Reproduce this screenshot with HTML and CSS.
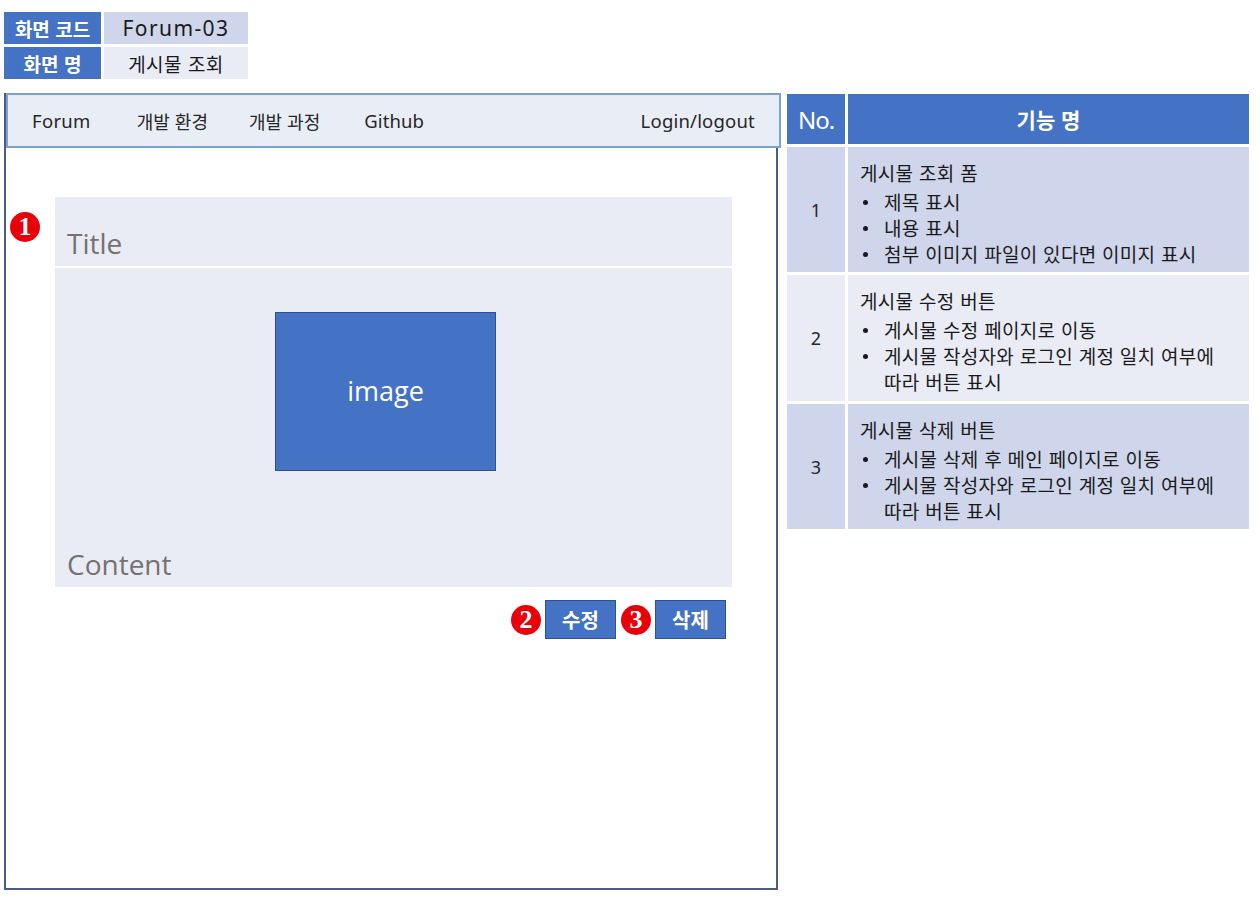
FILE: index.html
```html
<!DOCTYPE html>
<html lang="ko">
<head>
<meta charset="utf-8">
<title>Forum-03 게시물 조회</title>
<link rel="stylesheet" href="styles.css">
</head>
<body>
<div class="meta">
  <div class="meta-row">
    <div class="meta-label">화면 코드</div>
    <div class="meta-value meta-value-a">Forum-03</div>
  </div>
  <div class="meta-row">
    <div class="meta-label">화면 명</div>
    <div class="meta-value meta-value-b">게시물 조회</div>
  </div>
</div>

<div class="main">
  <div class="frame">
    <nav class="navbar">
      <span class="nav-item nav-forum">Forum</span>
      <span class="nav-item nav-env">개발 환경</span>
      <span class="nav-item nav-proc">개발 과정</span>
      <span class="nav-item nav-git">Github</span>
      <span class="nav-login">Login/logout</span>
    </nav>
    <div class="post">
      <span class="badge badge-1">1</span>
      <div class="title-box">Title</div>
      <div class="content-box">
        <div class="image">image</div>
        <div class="content-label">Content</div>
      </div>
      <div class="actions">
        <span class="badge badge-inline">2</span>
        <button class="btn">수정</button>
        <span class="badge badge-inline">3</span>
        <button class="btn">삭제</button>
      </div>
    </div>
  </div>

  <div class="spec">
    <div class="spec-head spec-no">No.</div>
    <div class="spec-head spec-name">기능 명</div>

    <div class="spec-num row-a">1</div>
    <div class="spec-desc row-a">
      <div class="spec-title">게시물 조회 폼</div>
      <ul>
        <li>제목 표시</li>
        <li>내용 표시</li>
        <li>첨부 이미지 파일이 있다면 이미지 표시</li>
      </ul>
    </div>

    <div class="spec-num row-b">2</div>
    <div class="spec-desc row-b">
      <div class="spec-title">게시물 수정 버튼</div>
      <ul>
        <li>게시물 수정 페이지로 이동</li>
        <li>게시물 작성자와 로그인 계정 일치 여부에 따라 버튼 표시</li>
      </ul>
    </div>

    <div class="spec-num row-a">3</div>
    <div class="spec-desc row-a">
      <div class="spec-title">게시물 삭제 버튼</div>
      <ul>
        <li>게시물 삭제 후 메인 페이지로 이동</li>
        <li>게시물 작성자와 로그인 계정 일치 여부에 따라 버튼 표시</li>
      </ul>
    </div>
  </div>
</div>
</body>
</html>
```

FILE: styles.css
```css
* { box-sizing: border-box; }

html, body {
  margin: 0;
  padding: 0;
  background: #ffffff;
}

body {
  width: 1260px;
  height: 902px;
  font-family: "Noto Sans CJK KR", "Noto Sans", sans-serif;
  color: #1a1a1a;
  overflow: hidden;
}

/* ---------- screen meta table ---------- */
.meta {
  margin: 12px 0 0 4px;
  display: flex;
  flex-direction: column;
  gap: 3px;
  width: 244px;
}

.meta-row {
  display: flex;
  gap: 3px;
  height: 32px;
}

.meta-label {
  width: 97px;
  background: #4472c4;
  color: #ffffff;
  font-weight: 700;
  font-size: 19px;
  display: flex;
  align-items: center;
  justify-content: center;
  line-height: 1;
}

.meta-value {
  flex: 1;
  display: flex;
  align-items: center;
  justify-content: center;
  font-size: 19px;
  line-height: 1;
  color: #1a1a1a;
}

.meta-value-a {
  background: #cfd5ea;
  font-family: "Noto Sans", sans-serif;
  font-size: 21px;
  letter-spacing: 1.4px;
}
.meta-value-b { background: #e9ebf5; letter-spacing: 0.5px; }

/* ---------- main area ---------- */
.main {
  display: flex;
  gap: 9px;
  margin: 14px 0 0 4px;
  align-items: flex-start;
}

.frame {
  width: 774px;
  height: 797px;
  border: 2px solid #4a5d87;
  border-top: none;
  display: flex;
  flex-direction: column;
}

.navbar {
  height: 55px;
  margin: 0 -5px 0 0;
  background: #e9edf6;
  border: 2px solid #79a2d3;
  display: flex;
  align-items: center;
  font-family: "Noto Sans", "Noto Sans CJK KR", sans-serif;
  font-size: 18.5px;
  color: #262626;
  padding: 0 24px 0 0;
}

.nav-forum { margin-left: 24px; letter-spacing: 0.3px; }
.nav-env { margin-left: 46px; font-family: "Noto Sans CJK KR", sans-serif; font-size: 18px; }
.nav-proc { margin-left: 41px; font-family: "Noto Sans CJK KR", sans-serif; font-size: 18px; }
.nav-git { margin-left: 44px; letter-spacing: 0.1px; }
.nav-login { margin-left: auto; letter-spacing: 0.2px; }

.post {
  position: relative;
  padding: 49px 44px 0 49px;
  display: flex;
  flex-direction: column;
}

.title-box {
  height: 69px;
  background: #e9ebf5;
  font-family: "Open Sans", "Noto Sans", sans-serif;
  font-size: 28px;
  color: #767171;
  display: flex;
  align-items: flex-end;
  padding: 0 0 9px 12px;
  line-height: 1;
}

.content-box {
  margin-top: 2px;
  height: 319px;
  background: #e9ebf5;
  display: flex;
  flex-direction: column;
  padding: 44px 0 0 0;
}

.image {
  width: 221px;
  height: 159px;
  margin-left: 220px;
  background: #4472c4;
  border: 1px solid #2f528f;
  color: #ffffff;
  font-family: "Open Sans", "Noto Sans", sans-serif;
  font-size: 27px;
  display: flex;
  align-items: center;
  justify-content: center;
  padding-bottom: 2px;
}

.content-label {
  margin-top: auto;
  padding: 0 0 9px 12px;
  font-family: "Open Sans", "Noto Sans", sans-serif;
  font-size: 28px;
  color: #767171;
  line-height: 1;
}

.actions {
  margin-top: 13px;
  display: flex;
  justify-content: flex-end;
  align-items: center;
  padding-right: 6px;
}

.btn {
  width: 71px;
  height: 39px;
  background: #4472c4;
  border: 1.5px solid #2f528f;
  color: #ffffff;
  font-family: "Noto Sans CJK KR", sans-serif;
  font-weight: 700;
  font-size: 20px;
  padding: 0;
  margin: 0;
  line-height: 1;
}

.badge {
  width: 30px;
  height: 30px;
  border-radius: 50%;
  background: #e8000b;
  color: #ffffff;
  font-family: "Liberation Serif", serif;
  font-weight: 700;
  font-size: 26px;
  line-height: 30px;
  text-align: center;
  display: inline-block;
}

.badge-1 {
  position: absolute;
  left: 4px;
  top: 64px;
}

.badge-inline {
  margin: 0 4px 0 5px;
}

/* ---------- spec table ---------- */
.spec {
  width: 462px;
  margin-top: 1px;
  display: grid;
  grid-template-columns: 58px 401px;
  grid-template-rows: 50px 125px 126px 125px;
  column-gap: 3px;
  row-gap: 3px;
}

.spec-head {
  background: #4472c4;
  color: #ffffff;
  display: flex;
  align-items: center;
  justify-content: center;
}

.spec-no {
  font-family: "Noto Sans", sans-serif;
  font-size: 24px;
  letter-spacing: -1px;
}

.spec-name {
  font-family: "Noto Sans CJK KR", sans-serif;
  font-size: 21px;
  font-weight: 700;
}

.row-a { background: #cfd5ea; }
.row-b { background: #e9ebf5; }

.spec-num {
  display: flex;
  align-items: center;
  justify-content: center;
  font-family: "Noto Sans", sans-serif;
  font-size: 18px;
  color: #262626;
}

.spec-desc {
  padding: 13px 20px 0 12px;
  font-size: 19px;
  letter-spacing: 0.3px;
  color: #1a1a1a;
  line-height: 26px;
}

.spec-title { margin-bottom: 3px; }

.spec-desc ul {
  margin: 0;
  padding: 0;
  list-style: none;
}

.spec-desc li {
  position: relative;
  padding-left: 24px;
}

.spec-desc li::before {
  content: "";
  position: absolute;
  left: 3px;
  top: 11px;
  width: 5px;
  height: 5px;
  border-radius: 50%;
  background: #1a1a1a;
}
```
